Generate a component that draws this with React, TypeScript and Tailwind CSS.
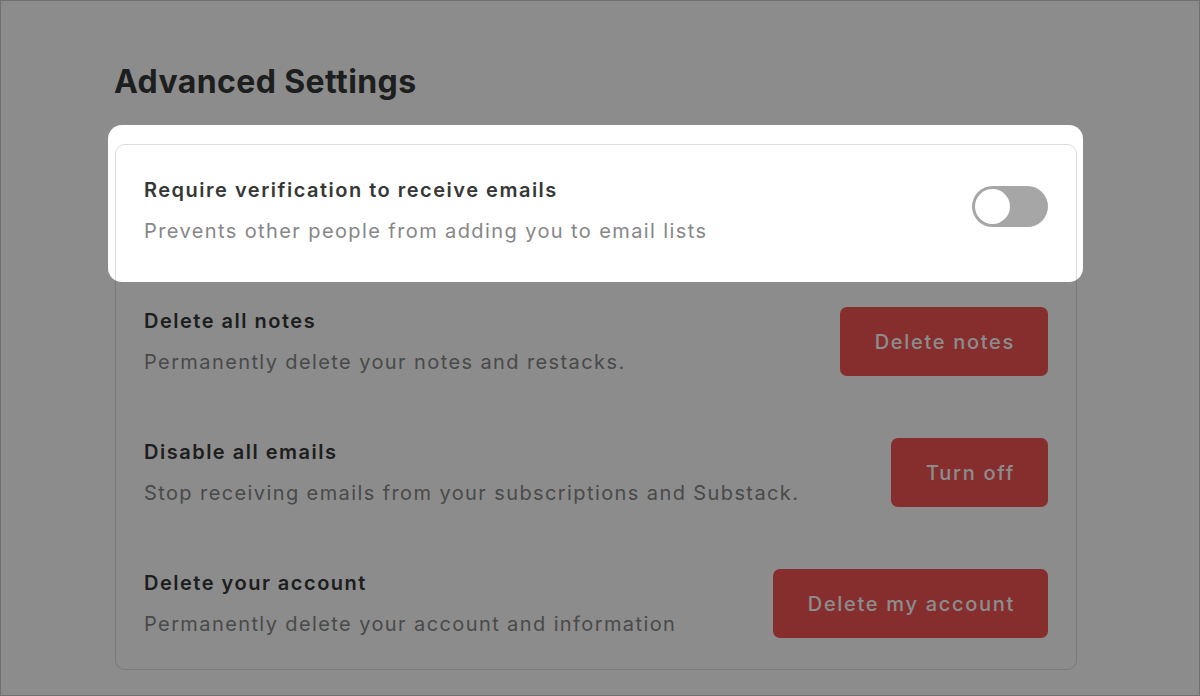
import { useState } from "react";

interface DangerRow {
  title: string;
  description: string;
  action: string;
}

const dangerRows: DangerRow[] = [
  {
    title: "Delete all notes",
    description: "Permanently delete your notes and restacks.",
    action: "Delete notes",
  },
  {
    title: "Disable all emails",
    description: "Stop receiving emails from your subscriptions and Substack.",
    action: "Turn off",
  },
  {
    title: "Delete your account",
    description: "Permanently delete your account and information",
    action: "Delete my account",
  },
];

const Toggle = ({ on, onChange }: { on: boolean; onChange: (v: boolean) => void }) => {
  return (
    <button
      type="button"
      onClick={() => onChange(!on)}
      className={
        "flex h-[41px] w-[76px] shrink-0 items-center rounded-full p-[3px] mb-2 " +
        (on ? "justify-end bg-[#ff6719]" : "justify-start bg-[#a6a6a6]")
      }
    >
      <span className="block h-[35px] w-[35px] rounded-full bg-white" />
    </button>
  );
};

const App = () => {
  const [verify, setVerify] = useState(false);

  return (
    <div
      className="h-[696px] w-full overflow-hidden border border-[#707070] bg-white"
      style={{ fontFamily: "Inter, 'Liberation Sans', sans-serif" }}
    >
      <div className="ml-[114px] w-[962px] pt-[61px]">
        <h1 className="-ml-[1px] text-[32px] leading-[40px] font-bold tracking-[0.4px] text-[#363737]">
          Advanced Settings
        </h1>

        <div className="mt-[42px] rounded-[10px] border border-[#dedede]">
          {/* highlighted row, the rest of the page sits under the dim */}
          <div className="relative flex items-center justify-between px-[28px] py-[31px]">
            <div className="pointer-events-none absolute -top-[20px] -bottom-[6px] -left-[8px] -right-[7px] z-10 rounded-[14px] shadow-[0_0_0_3000px_rgba(0,0,0,0.45)]" />
            <div className="flex flex-col gap-[13px]">
              <div className="text-[20px] leading-[28px] font-semibold tracking-[1.5px] text-[#363737]">
                Require verification to receive emails
              </div>
              <div className="text-[20px] leading-[28px] tracking-[1.4px] text-[#868787]">
                Prevents other people from adding you to email lists
              </div>
            </div>
            <Toggle on={verify} onChange={setVerify} />
          </div>

          {dangerRows.map((row) => (
            <div key={row.title} className="flex items-center justify-between px-[28px] py-[31px]">
              <div className="flex flex-col gap-[13px]">
                <div className="text-[20px] leading-[28px] font-semibold tracking-[1.5px] text-[#363737]">
                  {row.title}
                </div>
                <div className="text-[20px] leading-[28px] tracking-[1.4px] text-[#868787]">
                  {row.description}
                </div>
              </div>
              <button
                type="button"
                className="flex h-[69px] shrink-0 items-center rounded-[7px] bg-[#f45454] pl-[35px] pr-[33px] text-[20px] font-medium tracking-[1.7px] text-white"
              >
                {row.action}
              </button>
            </div>
          ))}
        </div>
      </div>
    </div>
  );
};

export default App;
